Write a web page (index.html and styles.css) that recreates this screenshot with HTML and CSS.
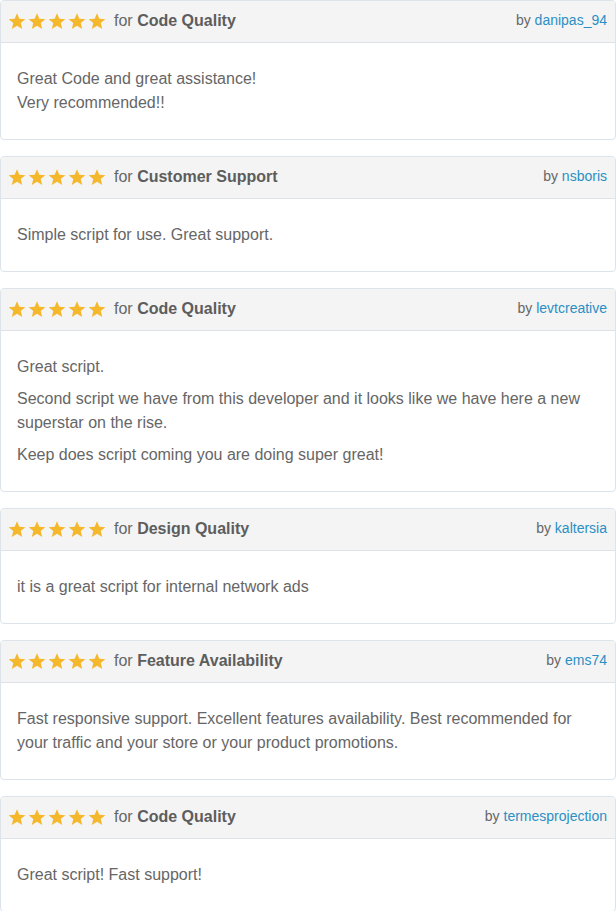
FILE: index.html
```html
<!DOCTYPE html>
<html lang="en">
<head>
    <meta charset="UTF-8">
    <title>Reviews</title>
    <link rel="stylesheet" href="styles.css">
</head>
<body>
    <svg width="0" height="0" class="defs">
        <symbol id="star" viewBox="0 0 24 24">
            <path d="M12 1.5l3.1 7.4 8 .6-6.1 5.2 1.9 7.8L12 18.3l-6.9 4.2 1.9-7.8L.9 9.5l8-.6z"/>
        </symbol>
    </svg>

    <div class="review">
        <div class="review-head">
            <div class="rating">
                <span class="stars"><svg><use href="#star"/></svg><svg><use href="#star"/></svg><svg><use href="#star"/></svg><svg><use href="#star"/></svg><svg><use href="#star"/></svg></span>
                <span class="for">for <b>Code Quality</b></span>
            </div>
            <div class="author">by <a href="#">danipas_94</a></div>
        </div>
        <div class="review-body">
            <p>Great Code and great assistance!<br>Very recommended!!</p>
        </div>
    </div>

    <div class="review">
        <div class="review-head">
            <div class="rating">
                <span class="stars"><svg><use href="#star"/></svg><svg><use href="#star"/></svg><svg><use href="#star"/></svg><svg><use href="#star"/></svg><svg><use href="#star"/></svg></span>
                <span class="for">for <b>Customer Support</b></span>
            </div>
            <div class="author">by <a href="#">nsboris</a></div>
        </div>
        <div class="review-body">
            <p>Simple script for use. Great support.</p>
        </div>
    </div>

    <div class="review">
        <div class="review-head">
            <div class="rating">
                <span class="stars"><svg><use href="#star"/></svg><svg><use href="#star"/></svg><svg><use href="#star"/></svg><svg><use href="#star"/></svg><svg><use href="#star"/></svg></span>
                <span class="for">for <b>Code Quality</b></span>
            </div>
            <div class="author">by <a href="#">levtcreative</a></div>
        </div>
        <div class="review-body">
            <p>Great script.</p>
            <p>Second script we have from this developer and it looks like we have here a new superstar on the rise.</p>
            <p>Keep does script coming you are doing super great!</p>
        </div>
    </div>

    <div class="review">
        <div class="review-head">
            <div class="rating">
                <span class="stars"><svg><use href="#star"/></svg><svg><use href="#star"/></svg><svg><use href="#star"/></svg><svg><use href="#star"/></svg><svg><use href="#star"/></svg></span>
                <span class="for">for <b>Design Quality</b></span>
            </div>
            <div class="author">by <a href="#">kaltersia</a></div>
        </div>
        <div class="review-body">
            <p>it is a great script for internal network ads</p>
        </div>
    </div>

    <div class="review">
        <div class="review-head">
            <div class="rating">
                <span class="stars"><svg><use href="#star"/></svg><svg><use href="#star"/></svg><svg><use href="#star"/></svg><svg><use href="#star"/></svg><svg><use href="#star"/></svg></span>
                <span class="for">for <b>Feature Availability</b></span>
            </div>
            <div class="author">by <a href="#">ems74</a></div>
        </div>
        <div class="review-body">
            <p>Fast responsive support. Excellent features availability. Best recommended for your traffic and your store or your product promotions.</p>
        </div>
    </div>

    <div class="review">
        <div class="review-head">
            <div class="rating">
                <span class="stars"><svg><use href="#star"/></svg><svg><use href="#star"/></svg><svg><use href="#star"/></svg><svg><use href="#star"/></svg><svg><use href="#star"/></svg></span>
                <span class="for">for <b>Code Quality</b></span>
            </div>
            <div class="author">by <a href="#">termesprojection</a></div>
        </div>
        <div class="review-body">
            <p>Great script! Fast support!</p>
        </div>
    </div>
</body>
</html>
```

FILE: styles.css
```css
body {
    margin: 0;
    background: #fff;
    font-family: "Liberation Sans", Arial, sans-serif;
    color: #666;
}
.defs {
    position: absolute;
}
.review {
    border: 1px solid #dde3e8;
    border-radius: 4px;
    margin-bottom: 16px;
    overflow: hidden;
}
.review-head {
    display: flex;
    justify-content: space-between;
    align-items: center;
    box-sizing: border-box;
    height: 42px;
    padding: 0 8px 2px 7px;
    background-color: #f4f4f4;
    border-bottom: 1px solid #dde3e8;
}
.rating {
    display: flex;
    align-items: center;
}
.stars {
    display: flex;
    gap: 2px;
    margin-right: 8px;
}
.stars svg {
    width: 18px;
    height: 18px;
    fill: #f5b82c;
}
.for {
    font-size: 16px;
    color: #666;
}
.for b {
    color: #5d5d5d;
}
.author {
    font-size: 14px;
    color: #666;
    margin-top: -2px;
}
.author a {
    color: #2b8fc4;
    text-decoration: none;
}
.review-body {
    padding: 16px;
}
.review-body p {
    margin: 8px 0;
    font-size: 16px;
    line-height: 24px;
}
```
